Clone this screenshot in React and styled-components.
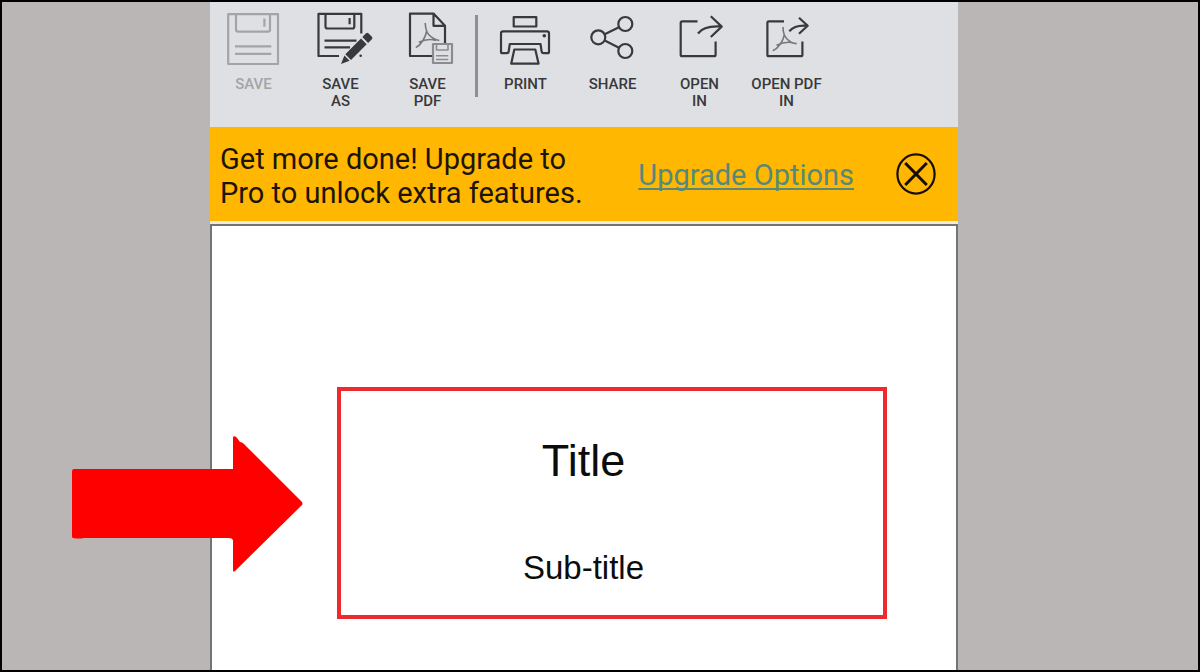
import React from 'react';
import styled, { createGlobalStyle } from 'styled-components';

const GlobalStyle = createGlobalStyle`
  *, *::before, *::after { box-sizing: border-box; }
  body { margin: 0; background: #bab6b5; }
`;

const Frame = styled.div`
  min-height: 100vh;
  display: grid;
  grid-template-columns: 208fr 748fr 240fr;
  border: 2px solid #000;
  background: #bab6b5;
  font-family: Roboto, "Liberation Sans", sans-serif;
`;

const AppColumn = styled.main`
  grid-column: 2;
  display: flex;
  flex-direction: column;
  background: #f2ecd8;
`;

const Toolbar = styled.header`
  display: flex;
  align-items: flex-start;
  min-height: 125px;
  padding: 10px 0 16px;
  background: #dfe0e3;
`;

const ToolButton = styled.button`
  display: flex;
  flex-direction: column;
  align-items: center;
  gap: 8px;
  width: 87px;
  padding: 0;
  border: 0;
  background: none;
  color: ${(p) => (p.disabled ? '#a3a4a6' : '#38393b')};
  font: 500 15px/17px Roboto, "Liberation Sans", sans-serif;
  text-align: center;
  white-space: pre-line;
`;

const ToolIcon = styled.svg`
  display: block;
  width: 63px;
  height: 56px;
  overflow: visible;
  fill: none;
  stroke: currentColor;
  stroke-width: 2.2;
  stroke-linejoin: round;
`;

const Divider = styled.div`
  width: 3px;
  height: 82px;
  margin: 3px 4px 0;
  background: #8f9093;
`;

const Banner = styled.section`
  display: flex;
  align-items: center;
  min-height: 94px;
  padding: 0 22px 0 10px;
  background: #ffb701;
`;

const BannerText = styled.p`
  flex: 1;
  margin: 0;
  padding-top: 4px;
  color: #1c1408;
  font-size: 29px;
  line-height: 34px;
  white-space: pre-line;
`;

const UpgradeLink = styled.a`
  margin-right: 42px;
  padding-top: 2px;
  color: #56897b;
  font-size: 29px;
  line-height: 34px;
  text-decoration: underline;
  text-decoration-thickness: 2px;
  text-decoration-skip-ink: none;
  text-underline-offset: 3px;
`;

const CloseButton = styled.button`
  padding: 0;
  border: 0;
  background: none;
  color: #160e02;

  svg { display: block; }
`;

const Document = styled.section`
  position: relative;
  flex: 1;
  margin-top: 3px;
  padding: 161px 69px 50px 125px;
  border: 2px solid #737475;
  border-bottom: 0;
  background: #fff;
`;

const Highlight = styled.div`
  padding: 44px 57px 28px 0;
  border: 4px solid #ee2a2e;
  color: #0c0c0c;
  font-family: "Liberation Sans", Arial, sans-serif;
  text-align: center;
`;

const Title = styled.h1`
  margin: 0 0 62px;
  font-size: 45px;
  font-weight: 400;
  line-height: 52px;
`;

const Subtitle = styled.h2`
  margin: 0;
  font-size: 33px;
  font-weight: 400;
  line-height: 38px;
`;

const Arrow = styled.svg`
  position: absolute;
  top: 210px;
  left: -140px;
  width: 231px;
  height: 136px;
`;

const SaveIcon = () => (
  <>
    <rect x="6.2" y="2.2" width="49.8" height="49.8" />
    <path d="M14 2.2V17.5Q14 19.6 16 19.6H46Q48 19.6 48 17.5V2.2M42.4 6.5V14.7M13 34.4H49.3M13 41.8H49.3" />
  </>
);

const SaveAsIcon = () => (
  <>
    <path d="M30 44H9.5V1.8H52.3V21.5M16.5 2V14.5Q16.5 16.5 18.5 16.5H43.5Q45.3 16.5 45.3 14.5V2M40.6 6V12.3M15.5 28.6H47.5M15.5 35.4H41" />
    <g fill="currentColor" stroke="none">
      <path d="M36.3 42.2L52 26.5L57.7 32.2L42 47.9ZM35.4 43.6L40.6 48.8L32 52ZM53.3 25.1L57 21.3Q58.2 20.2 59.4 21.3L62.9 24.8Q64 26 62.9 27.2L59.1 30.9Z" />
      <circle cx="51.7" cy="43.8" r="1.3" />
    </g>
  </>
);

const SavePdfIcon = () => (
  <>
    <path d="M36 44H14V1.6H37.5L49 13.8V31M37.5 2V13.8H49" />
    <g stroke="#77787b" strokeWidth="1.6">
      <path d="M29.2 11C29.6 17 30.5 20.2 32.6 22.5C35.5 25.6 39 27.8 43.3 28.5M30.8 18.5C29.6 25.5 25 33 19.8 35.6M22.8 30.3C27.5 28 34 26.5 40 28.5" />
    </g>
    <g stroke="#8b8c8f">
      <rect x="37" y="32" width="19" height="19" fill="#dfe0e3" />
      <path strokeWidth="1.6" d="M40.5 32V38H52V32M40 43.8H52.3M40 47.5H52.3" />
    </g>
  </>
);

const PrintIcon = () => (
  <>
    <path d="M19.7 5.2H42.3V14.5H19.7ZM10 41.2H8.3Q7 41.2 7 39.7V21.2Q7 19.3 9 19.3H53Q55 19.3 55 21.2V39.7Q55 41.2 53.5 41.2H49.5Q48 41.2 47.7 39.8L46.5 32H15.8L14.6 39.8Q14.3 41.2 13 41.2H10ZM20.3 37.5H41.3L44.6 51.7H17.2Z" />
    <circle cx="50.3" cy="23.8" r="1.8" fill="currentColor" stroke="none" />
  </>
);

const ShareIcon = () => (
  <>
    <circle cx="44.3" cy="12" r="7" />
    <circle cx="17.3" cy="25.3" r="7" />
    <circle cx="44.3" cy="39" r="7" />
    <path d="M23.7 22.2L38 15.2M23.7 28.5L38 35.7" />
  </>
);

const OpenInIcon = () => (
  <path d="M29.5 9.4H14.2Q12.7 9.4 12.7 11V42.7Q12.7 44.2 14.2 44.2H46Q47.6 44.2 47.6 42.7V29.5M30 21.5C34 15.8 42 13.8 53.5 14.6M42.8 4.2L53.7 14.6L42.8 25" />
);

const OpenPdfIcon = () => (
  <>
    <path d="M29 9.4H13.8Q12.4 9.4 12.4 11V42.7Q12.4 44.2 13.8 44.2H45.8Q47.4 44.2 47.4 42.7V29.5M34.3 19.3C38 14.8 44 13 52.5 13.8M44 5.8L52.7 13.8L44 21.8" />
    <path stroke="#77787b" strokeWidth="1.6" d="M28 15C28 21 29.5 24.4 32 27C34.5 29.4 38 31.4 41.7 31.6M29.3 22.5C28.5 29 23 36.5 17.8 38.8M21.5 33.3C27 30.8 34 29.5 38.7 31.2" />
  </>
);

const fileActions = [
  { label: 'SAVE', Icon: SaveIcon, disabled: true },
  { label: 'SAVE\nAS', Icon: SaveAsIcon },
  { label: 'SAVE\nPDF', Icon: SavePdfIcon },
];

const shareActions = [
  { label: 'PRINT', Icon: PrintIcon },
  { label: 'SHARE', Icon: ShareIcon },
  { label: 'OPEN\nIN', Icon: OpenInIcon },
  { label: 'OPEN PDF\nIN', Icon: OpenPdfIcon },
];

const Tool = ({ label, Icon, disabled }) => (
  <ToolButton type="button" disabled={disabled}>
    <ToolIcon viewBox="0 0 63 56" aria-hidden="true"><Icon /></ToolIcon>
    <span>{label}</span>
  </ToolButton>
);

export default function App() {
  return (
    <>
      <GlobalStyle />
      <Frame>
        <AppColumn>
          <Toolbar>
            {fileActions.map((a) => <Tool key={a.label} {...a} />)}
            <Divider />
            {shareActions.map((a) => <Tool key={a.label} {...a} />)}
          </Toolbar>
          <Banner>
            <BannerText>{'Get more done! Upgrade to\nPro to unlock extra features.'}</BannerText>
            <UpgradeLink href="#upgrade">Upgrade Options</UpgradeLink>
            <CloseButton type="button" aria-label="Close">
              <svg width="40" height="42" viewBox="0 0 40 42" fill="none" stroke="currentColor" aria-hidden="true">
                <ellipse cx="20" cy="21" rx="18.6" ry="19.6" strokeWidth="2.2" />
                <path d="M9.2 10L30.8 32M30.8 10L9.2 32" strokeWidth="3" />
              </svg>
            </CloseButton>
          </Banner>
          <Document>
            <Highlight>
              <Title>Title</Title>
              <Subtitle>Sub-title</Subtitle>
            </Highlight>
            <Arrow viewBox="0 0 231 136" aria-hidden="true">
              <path fill="#ff0000" d="M2 33H161V1Q163 -1 165 2L168 6Q170 6 172 8L230 66Q231 68 230 69L163 135Q161 137 161 134V104Q160 102 157 102H12Q7 103 1 102Q0 102 0 100V36Q0 33 2 33Z" />
            </Arrow>
          </Document>
        </AppColumn>
      </Frame>
    </>
  );
}
